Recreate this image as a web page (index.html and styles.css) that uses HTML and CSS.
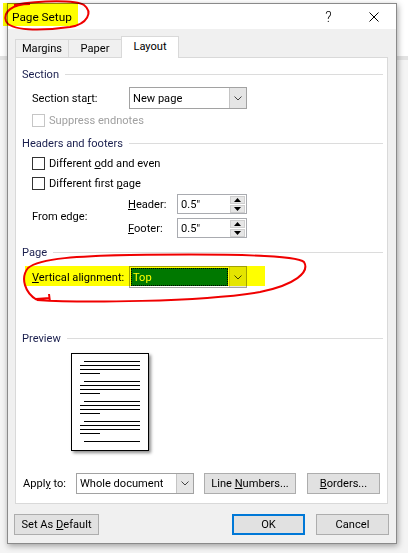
FILE: index.html
```html
<!DOCTYPE html>
<html>
<head>
<meta charset="utf-8">
<link rel="stylesheet" href="styles.css">
</head>
<body>
<div class="desktop">
  <div class="dialog">
    <div class="titlebar">
      <span class="title">Page Setup</span>
      <span class="tb-btn help">?</span>
      <span class="tb-btn close"><svg width="10" height="10" viewBox="0 0 10 10"><path d="M0.5 0.5 L9.5 9.5 M9.5 0.5 L0.5 9.5" stroke="#000" stroke-width="1" fill="none"/></svg></span>
    </div>
    <div class="body">
      <div class="tabs">
        <div class="tab t-margins">Margins</div>
        <div class="tab t-paper">Paper</div>
        <div class="tab t-layout active">Layout</div>
      </div>
      <div class="panel">
        <div class="group-head g-section"><span>Section</span><i class="rule"></i></div>
        <div class="row r-start">
          <span class="lbl">Section sta<u>r</u>t:</span>
          <div class="combo"><span class="combo-text">New page</span><span class="combo-btn"><svg width="8" height="5" viewBox="0 0 8 5"><path d="M0.5 0.5 L4 4 L7.5 0.5" stroke="#444" fill="none"/></svg></span></div>
        </div>
        <div class="check disabled r-suppress"><span class="box"></span><span>Suppress endnotes</span></div>

        <div class="group-head g-headers"><span>Headers and footers</span><i class="rule"></i></div>
        <div class="check r-odd"><span class="box"></span><span>Different <u>o</u>dd and even</span></div>
        <div class="check r-first"><span class="box"></span><span>Different first <u>p</u>age</span></div>
        <div class="edge">
          <span class="lbl edge-lbl">From edge:</span>
          <div class="edge-fields">
            <div class="edge-row">
              <span class="sublbl"><u>H</u>eader:</span>
              <div class="spin"><span class="spin-text">0.5"</span><span class="spin-btns"><span class="sb"><svg width="7" height="4" viewBox="0 0 7 4"><path d="M0 4 L3.5 0 L7 4 Z" fill="#000"/></svg></span><span class="sb"><svg width="7" height="4" viewBox="0 0 7 4"><path d="M0 0 L3.5 4 L7 0 Z" fill="#000"/></svg></span></span></div>
            </div>
            <div class="edge-row">
              <span class="sublbl"><u>F</u>ooter:</span>
              <div class="spin"><span class="spin-text">0.5"</span><span class="spin-btns"><span class="sb"><svg width="7" height="4" viewBox="0 0 7 4"><path d="M0 4 L3.5 0 L7 4 Z" fill="#000"/></svg></span><span class="sb"><svg width="7" height="4" viewBox="0 0 7 4"><path d="M0 0 L3.5 4 L7 0 Z" fill="#000"/></svg></span></span></div>
            </div>
          </div>
        </div>

        <div class="group-head g-page"><span>Page</span><i class="rule"></i></div>
        <div class="row r-valign">
          <span class="lbl"><u>V</u>ertical alignment:</span>
          <div class="combo"><span class="combo-text selected">Top</span><span class="combo-btn"><svg width="8" height="5" viewBox="0 0 8 5"><path d="M0.5 0.5 L4 4 L7.5 0.5" stroke="#444" fill="none"/></svg></span></div>
        </div>

        <div class="group-head g-preview"><span>Preview</span><i class="rule"></i></div>
        <div class="preview">
          <div class="sheet">
            <i class="ln ind"></i><i class="ln"></i><i class="ln"></i><i class="ln short"></i>
            <i class="ln ind para"></i><i class="ln"></i><i class="ln"></i><i class="ln short"></i>
            <i class="ln ind para"></i><i class="ln"></i><i class="ln"></i><i class="ln short"></i>
            <i class="ln ind para"></i><i class="ln"></i><i class="ln"></i><i class="ln short"></i>
            <i class="ln ind para"></i>
          </div>
        </div>

        <div class="apply">
          <span class="apply-lbl">Appl<u>y</u> to:</span>
          <div class="combo combo-apply"><span class="combo-text">Whole document</span><span class="combo-btn"><svg width="8" height="5" viewBox="0 0 8 5"><path d="M0.5 0.5 L4 4 L7.5 0.5" stroke="#444" fill="none"/></svg></span></div>
          <div class="btn b-lines"><span>Line <u>N</u>umbers...</span></div>
          <div class="btn b-borders"><span><u>B</u>orders...</span></div>
        </div>
      </div>
      <div class="footer">
        <div class="btn b-default"><span>Set As <u>D</u>efault</span></div>
        <div class="btn b-ok"><span>OK</span></div>
        <div class="btn b-cancel"><span>Cancel</span></div>
      </div>
    </div>
  </div>
</div>
<svg class="annot" width="408" height="553" viewBox="0 0 408 553">
  <rect x="3" y="3" width="75" height="23" fill="#ffff00"/>
  <rect x="25" y="266" width="240" height="20" fill="#ffff00"/>
  <path d="M30 4 C12 4 3 12 6 21 C10 31 40 31 70 27 C88 24 93 12 84 5 C76 0 42 0 14 5" stroke="#f00000" stroke-width="2" fill="none"/>
  <path d="M37 300 C80 303 200 302 260 292 C295 285 310 272 304 262 C296 254 200 254 130 255 C80 256 40 258 28 268 C20 278 25 293 37 300 M36 299 L50 298 M49 294 L50 302" stroke="#f00000" stroke-width="2" fill="none"/>
</svg>
</body>
</html>
```

FILE: styles.css
```css
* { box-sizing: border-box; }
html, body { margin: 0; padding: 0; }
body {
  width: 408px;
  height: 553px;
  overflow: hidden;
  position: relative;
  background: #f1f1f1;
  font-family: Roboto, "Noto Sans", sans-serif;
  font-size: 11.1px;
  color: #000;
  white-space: nowrap;
}
u { text-decoration: underline; text-underline-offset: 1px; }
.desktop {
  width: 408px;
  height: 553px;
  padding: 3px 0 0 7px;
  background: linear-gradient(to bottom, #ffffff 0, #ffffff 56px, #e2e2e2 56px, #e2e2e2 60px, #f4f4f4 60px);
}
.dialog {
  width: 390px;
  height: 541px;
  background: #f0f0f0;
  border: 1px solid #8a8a8a;
  box-shadow: 1px 2px 6px rgba(0,0,0,0.35);
  display: flex;
  flex-direction: column;
}
.titlebar {
  height: 25px;
  background: #fff;
  display: flex;
  align-items: center;
  padding-left: 4px;
  flex: none;
}
.title { flex: 1; font-size: 11.8px; }
.tb-btn {
  width: 45px;
  height: 25px;
  display: flex;
  align-items: center;
  justify-content: center;
}
.help { font-size: 14px; font-weight: 300; }
.body {
  flex: 1;
  padding: 7px 8px 0 7px;
  display: flex;
  flex-direction: column;
}
.tabs {
  height: 21px;
  display: flex;
  align-items: flex-start;
}
.tab {
  height: 18px;
  margin-top: 3px;
  border: 1px solid #d9d9d9;
  border-bottom: none;
  background: #f0f0f0;
  display: flex;
  align-items: center;
  justify-content: center;
}
.t-margins { width: 54px; }
.t-paper { width: 54px; margin-left: -1px; }
.t-layout { width: 58px; margin-left: -1px; }
.tab.active {
  height: 22px;
  margin-top: 0;
  background: #fff;
  position: relative;
  z-index: 1;
  padding-bottom: 2px;
}
.panel {
  height: 447px;
  background: #fff;
  border: 1px solid #d9d9d9;
  padding: 0 4px 0 6px;
  display: flex;
  flex-direction: column;
}
.group-head {
  height: 16px;
  display: flex;
  align-items: center;
  color: #1a1f4e;
}
.rule {
  flex: 1;
  height: 1px;
  background: #dcdcdc;
  margin-left: 6px;
  margin-top: 1px;
}
.g-section { margin-top: 8px; }
.g-headers { margin-top: 7px; }
.g-page { margin-top: 6px; }
.g-preview { margin-top: 42px; }
.row {
  display: flex;
  align-items: center;
  padding-left: 10px;
}
.lbl { width: 97px; flex: none; }
.r-start { margin-top: 5px; }
.r-valign { margin-top: 6px; }
.combo {
  width: 118px;
  height: 22px;
  border: 1px solid #a2a2a2;
  background: #fff;
  display: flex;
  flex: none;
}
.combo-text {
  flex: 1;
  display: flex;
  align-items: center;
  padding-left: 3px;
}
.combo-text.selected {
  margin: 1px;
  padding-left: 2px;
  background: #0078d7;
  color: #fff;
  outline: 1px dotted #000;
  outline-offset: -1px;
}
.combo-btn {
  width: 17px;
  background: #e5e5e5;
  border-left: 1px solid #c4c4c4;
  display: flex;
  align-items: center;
  justify-content: center;
}
.check {
  height: 16px;
  display: flex;
  align-items: center;
  padding-left: 10px;
}
.box {
  width: 13px;
  height: 13px;
  border: 1px solid #333;
  background: #fff;
  margin-right: 4px;
}
.check.disabled { color: #a0a0a0; }
.check.disabled .box { border-color: #c6c6c6; }
.r-suppress { margin-top: 3px; }
.r-odd { margin-top: 4px; }
.r-first { margin-top: 4px; }
.edge {
  margin-top: 3px;
  display: flex;
  align-items: center;
  padding-left: 10px;
}
.edge-lbl { width: 96px; }
.edge-fields {
  display: flex;
  flex-direction: column;
  gap: 4px;
}
.edge-row { display: flex; align-items: center; }
.sublbl { width: 49px; }
.spin {
  width: 70px;
  height: 20px;
  border: 1px solid #a9abb0;
  background: #fff;
  display: flex;
}
.spin-text {
  flex: 1;
  display: flex;
  align-items: center;
  padding-left: 3px;
}
.spin-btns {
  width: 15px;
  margin: 0 1px 0 0;
  display: flex;
  flex-direction: column;
  justify-content: center;
  gap: 1px;
}
.sb {
  height: 8px;
  background: #e6e6e6;
  border: 1px solid #cfcfcf;
  display: flex;
  align-items: center;
  justify-content: center;
}
.preview {
  margin-top: 7px;
  padding-left: 49px;
}
.sheet {
  width: 78px;
  height: 98px;
  border: 1px solid #000;
  background: #fff;
  box-shadow: 2px 2px 3px rgba(0,0,0,0.45);
  padding-top: 7px;
  display: flex;
  flex-direction: column;
}
.ln {
  display: block;
  height: 1px;
  width: 60px;
  margin-left: 8px;
  margin-top: 3px;
  background: #000;
}
.ln:first-child { margin-top: 0; }
.ln.ind { width: 56px; margin-left: 12px; }
.ln.para { margin-top: 7px; }
.ln.short { width: 20px; }
.apply {
  margin-top: 22px;
  display: flex;
  align-items: center;
  padding-left: 1px;
}
.apply-lbl { width: 53px; flex: none; }
.combo-apply { height: 21px; }
.btn {
  height: 21px;
  border: 1px solid #adadad;
  background: #e1e1e1;
  display: flex;
  align-items: center;
  justify-content: center;
  flex: none;
}
.b-lines { width: 92px; margin-left: 10px; }
.b-borders { width: 73px; margin-left: 11px; }
.footer {
  margin-top: 10px;
  display: flex;
}
.b-default { width: 85px; margin-left: -1px; }
.b-ok { width: 73px; margin-left: auto; border: 2px solid #0078d7; }
.b-cancel { width: 73px; margin-left: 11px; margin-right: -1px; }
.annot {
  position: absolute;
  left: 0;
  top: 0;
  pointer-events: none;
  mix-blend-mode: multiply;
}
```
